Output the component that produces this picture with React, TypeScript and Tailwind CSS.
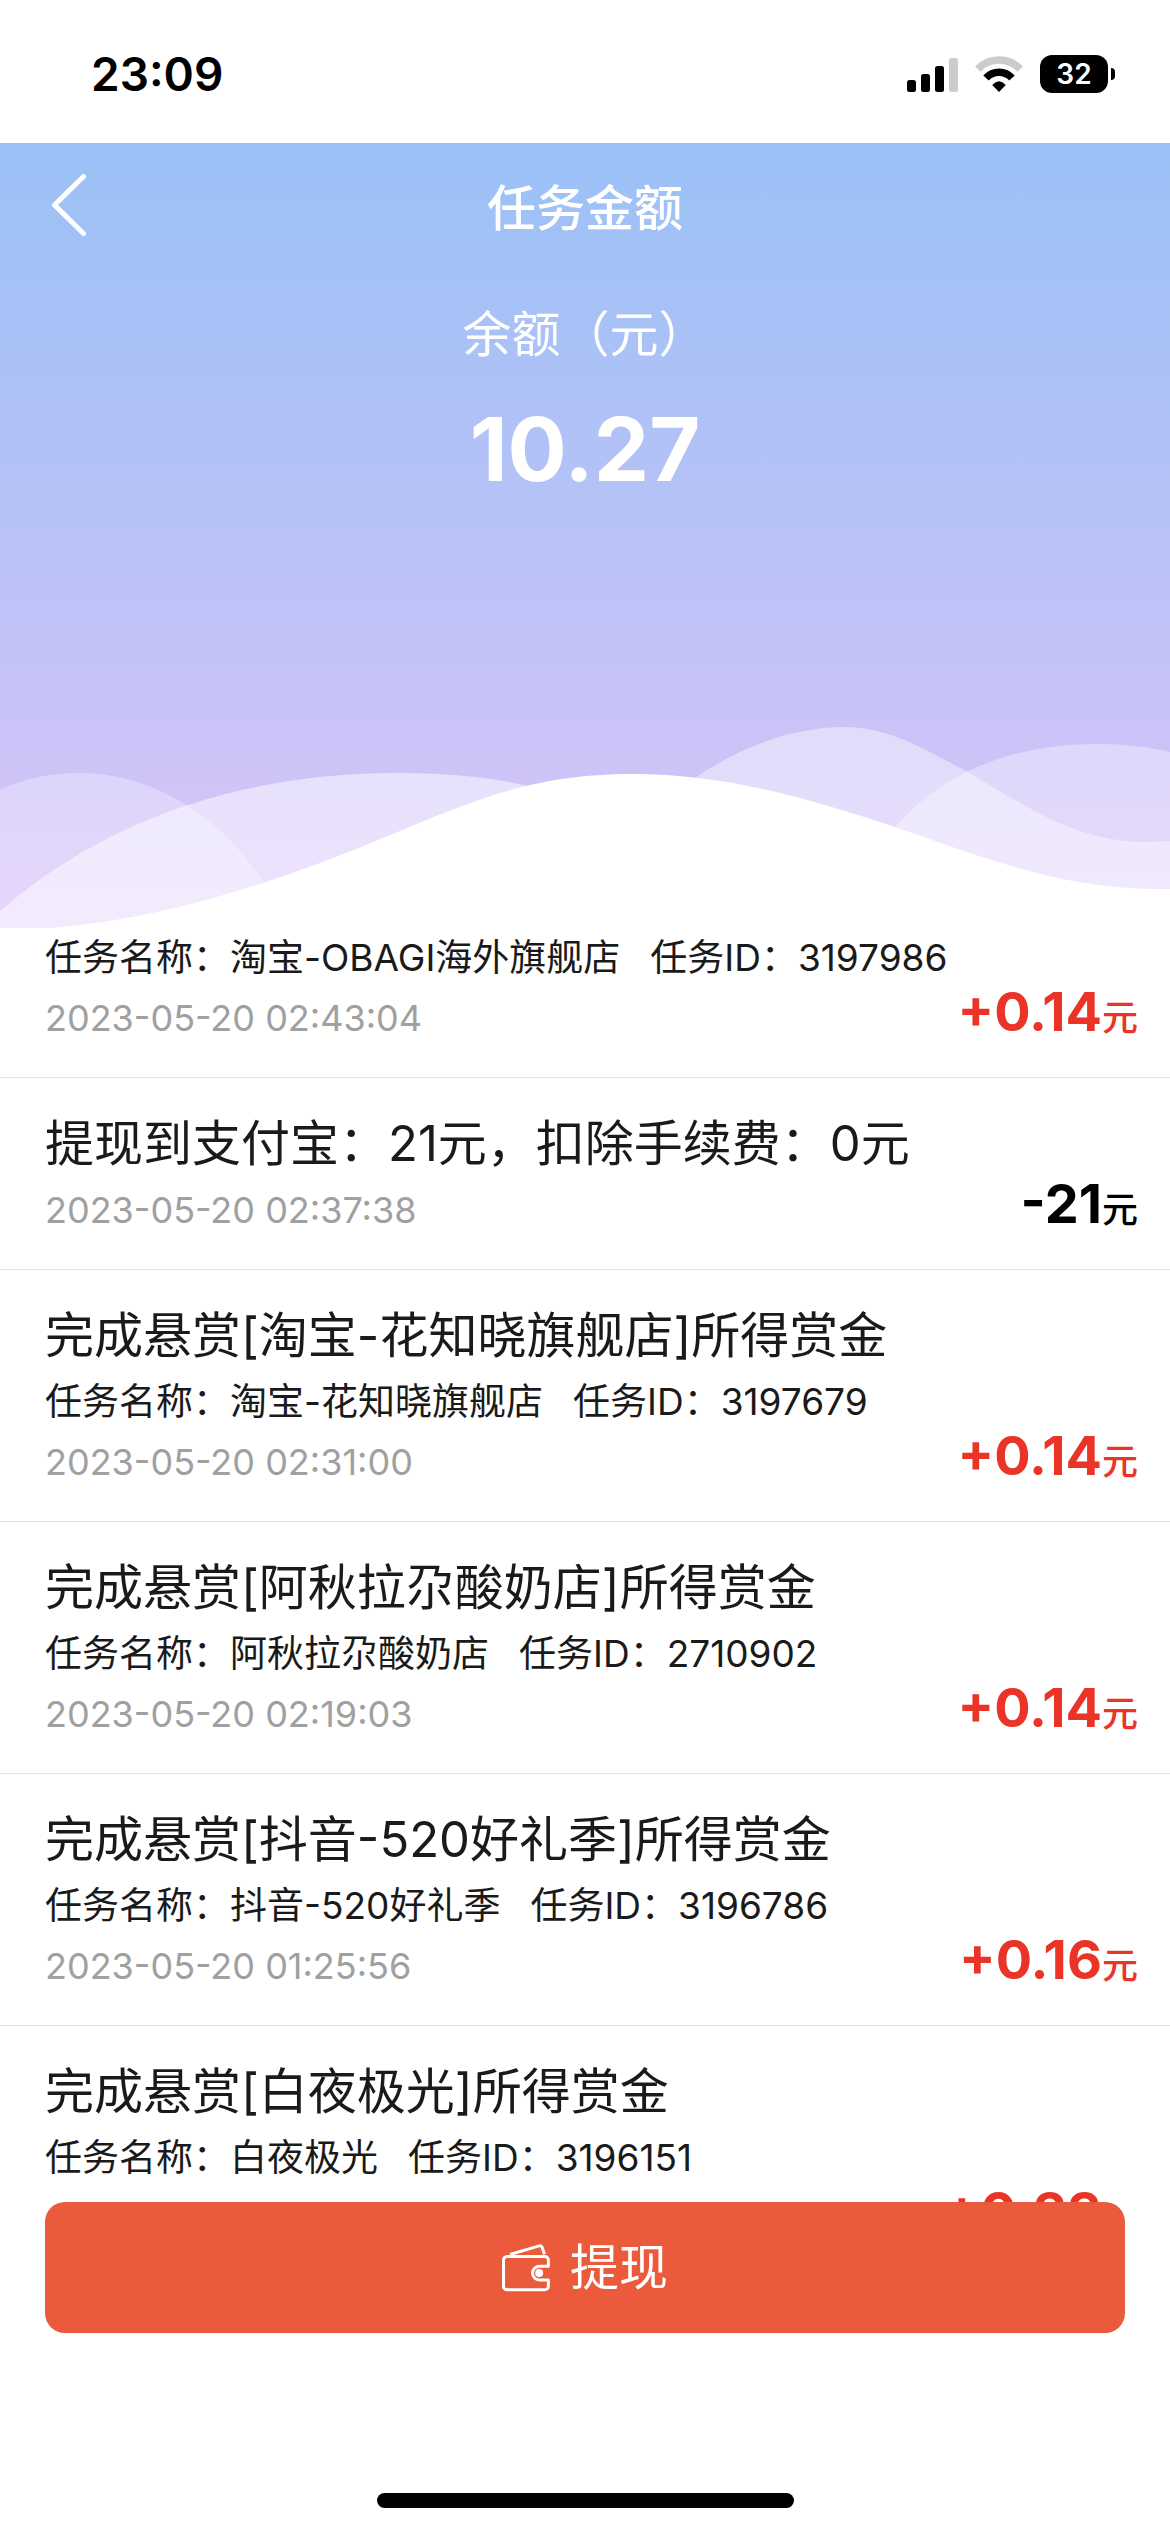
interface TaskRecord {
    title?: string;
    taskName?: string;
    taskId?: string;
    time?: string;
    amount: string;
    income: boolean;
}

const records: TaskRecord[] = [
    {
        taskName: '淘宝-OBAGI海外旗舰店',
        taskId: '3197986',
        time: '2023-05-20 02:43:04',
        amount: '+0.14',
        income: true
    },
    {
        title: '提现到支付宝：21元，扣除手续费：0元',
        time: '2023-05-20 02:37:38',
        amount: '-21',
        income: false
    },
    {
        title: '完成悬赏[淘宝-花知晓旗舰店]所得赏金',
        taskName: '淘宝-花知晓旗舰店',
        taskId: '3197679',
        time: '2023-05-20 02:31:00',
        amount: '+0.14',
        income: true
    },
    {
        title: '完成悬赏[阿秋拉尕酸奶店]所得赏金',
        taskName: '阿秋拉尕酸奶店',
        taskId: '2710902',
        time: '2023-05-20 02:19:03',
        amount: '+0.14',
        income: true
    },
    {
        title: '完成悬赏[抖音-520好礼季]所得赏金',
        taskName: '抖音-520好礼季',
        taskId: '3196786',
        time: '2023-05-20 01:25:56',
        amount: '+0.16',
        income: true
    },
    {
        title: '完成悬赏[白夜极光]所得赏金',
        taskName: '白夜极光',
        taskId: '3196151',
        amount: '+0.23',
        income: true
    }
];

function SignalIcon() {
    return (
        <svg className="w-[51px] h-[36px]" viewBox="0 0 51 36" aria-hidden="true">
            <rect x="0" y="24" width="9" height="12" rx="2.5" />
            <rect x="14" y="18" width="9" height="18" rx="2.5" />
            <rect x="28" y="10" width="9" height="26" rx="2.5" />
            <rect x="42" y="2" width="9" height="34" rx="2.5" fill="#cccccc" />
        </svg>
    );
}

function WifiIcon() {
    return (
        <svg className="w-[48px] h-[36px]" viewBox="0 0 48 36" fill="none" aria-hidden="true">
            <path d="M2.8 13.2A29 29 0 0 1 45.2 13.2" stroke="#cccccc" strokeWidth="7.6" />
            <path d="M11 22.1A17.5 17.5 0 0 1 37 22.1" stroke="#000" strokeWidth="7.4" />
            <path d="M17.2 28.9Q24 21.6 30.8 28.9L24 36Z" fill="#000" />
        </svg>
    );
}

function WalletIcon() {
    return (
        <svg
            className="w-12 h-12"
            viewBox="0 0 48 48"
            fill="none"
            stroke="currentColor"
            strokeWidth="3"
            strokeLinejoin="round"
            aria-hidden="true"
        >
            <path d="M46.4 22.2V16a3.6 3.6 0 0 0-3.6-3.6H5A3.6 3.6 0 0 0 1.5 16v26.2A3.6 3.6 0 0 0 5 45.8h37.8a3.6 3.6 0 0 0 3.6-3.6V36h-9a6.9 6.9 0 0 1 0-13.8Z" />
            <path d="M8 10.5 37.2 1.9q2.3-.6 3 1.6l2.3 6.8" />
            <circle cx="37.2" cy="29" r="4" fill="currentColor" stroke="none" />
        </svg>
    );
}

function StatusBar() {
    return (
        <div className="flex items-center justify-between h-[143px] shrink-0 pl-[91px] pr-[55px] pt-[5px]">
            <span className="text-[46px] font-semibold leading-none">23:09</span>
            <div className="flex items-center gap-[17px]">
                <SignalIcon />
                <WifiIcon />
                <div className="flex items-center gap-[3px]">
                    <span className="flex items-center justify-center w-[68px] h-[38px] rounded-xl bg-black text-white text-[28px] font-semibold leading-none">
                        32
                    </span>
                    <span className="w-1 h-3 rounded-r-full bg-black" />
                </div>
            </div>
        </div>
    );
}

function Waves() {
    return (
        <svg className="block w-full h-[210px]" viewBox="0 718 1170 210" preserveAspectRatio="none" fill="#fff" aria-hidden="true">
            <path opacity=".3" d="M0 790C25 778 52 773 78 773C140 773 212 803 264 883L290 930H0Z" />
            <path opacity=".5" d="M0 911C110 815 250 773 398 773C445 773 490 777 528 786L620 930H0Z" />
            <path opacity=".42" d="M696 777C740 748 790 727 845 727C890 727 925 750 968 772C1020 803 1075 842 1144 842L1170 841V930H696Z" />
            <path opacity=".35" d="M895 827C945 770 1015 744 1098 744C1125 744 1150 747 1170 752V930H895Z" />
            <path d="M0 930C130 930 258 890 383 838C470 802 530 774 633 774C730 774 815 801 895 827C985 858 1060 889 1160 889H1170V930Z" />
        </svg>
    );
}

function BalanceHeader() {
    return (
        <header className="flex flex-col h-[785px] shrink-0 text-white bg-linear-to-b from-[#9ac1f6] via-[#b8c2f6] via-50% to-[#dcc4f9]">
            <div className="grid grid-cols-[1fr_auto_1fr] items-center h-[130px] px-[50px]">
                <a href="#back" aria-label="返回" className="w-fit">
                    <svg className="w-[38px] h-[70px]" viewBox="0 0 38 70" fill="none" stroke="currentColor" strokeWidth="5" strokeLinecap="round" strokeLinejoin="round">
                        <path d="M33.5 3.5 4.5 32l29 28.5" />
                    </svg>
                </a>
                <h1 className="text-[49px] font-medium leading-none">任务金额</h1>
            </div>
            <div className="flex flex-col items-center pt-[26px]">
                <p className="text-[49px] leading-[72px]">余额（元）</p>
                <p className="text-[88px] leading-[112px] font-bold mt-[22px]">10.27</p>
            </div>
            <div className="mt-auto">
                <Waves />
            </div>
        </header>
    );
}

function RecordItem({ record }: { record: TaskRecord }) {
    return (
        <li className={`flex items-end justify-between pl-[45px] pr-8 pb-[29px] border-b border-[#e2e2e2] ${record.title ? 'pt-[30px]' : ''}`}>
            <div className="min-w-0 leading-[60px]">
                {record.title && (
                    <h2 className="text-[49px] leading-[72px] text-[#1a1a1a]">{record.title}</h2>
                )}
                {record.taskName && (
                    <p className="flex gap-[30px] text-[37px] text-[#1a1a1a]">
                        <span>任务名称：{record.taskName}</span>
                        <span>任务ID：{record.taskId}</span>
                    </p>
                )}
                <p className="h-[60px] text-[36px] text-[#a0a0a0]">{record.time}</p>
            </div>
            <p className={`shrink-0 font-bold text-[54px] leading-[60px] ${record.income ? 'text-[#e93427]' : 'text-black'}`}>
                {record.amount}
                <span className="text-[36px] font-medium">元</span>
            </p>
        </li>
    );
}

export default function App() {
    return (
        <div className="flex flex-col h-screen overflow-hidden bg-white text-black font-['Inter','Noto_Sans_CJK_SC',sans-serif]">
            <StatusBar />
            <BalanceHeader />
            <ul className="flex-1 min-h-0 overflow-hidden">
                {records.map((record, i) => (
                    <RecordItem key={i} record={record} />
                ))}
            </ul>
            <footer className="flex flex-col items-center shrink-0 px-[45px] pb-6">
                <button
                    type="button"
                    className="flex items-center justify-center gap-5 w-full h-[131px] rounded-[20px] bg-[#ea5a3b] text-white text-[49px] leading-none cursor-pointer"
                >
                    <WalletIcon />
                    提现
                </button>
                <div className="mt-40 w-[417px] h-[15px] rounded-full bg-black" />
            </footer>
        </div>
    );
}
